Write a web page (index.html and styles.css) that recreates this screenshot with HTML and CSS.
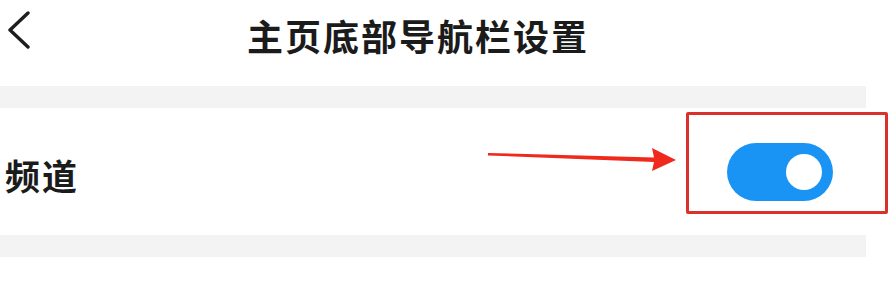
FILE: index.html
```html
<!DOCTYPE html>
<html lang="zh-CN">
<head>
    <meta charset="UTF-8">
    <meta name="viewport" content="width=device-width, initial-scale=1.0">
    <title>主页底部导航栏设置</title>
    <link rel="stylesheet" href="styles.css">
</head>
<body>
    <div class="page">
        <div class="header">
            <svg class="back" width="26" height="38" viewBox="0 0 26 38">
                <polyline points="22,2 4,19 22,36" fill="none" stroke="#1e1e1e" stroke-width="3.4" stroke-linecap="round" stroke-linejoin="round"/>
            </svg>
            <h1 class="title">主页底部导航栏设置</h1>
        </div>
        <div class="gap"></div>
        <div class="row">
            <span class="label">频道</span>
            <div class="toggle on"><span class="knob"></span></div>
            <!-- annotation: arrow and box -->
            <svg class="arrow" width="190" height="32" viewBox="0 0 190 32">
                <polygon points="0,13 166,17.5 164,8 188,20 164,31 166,22 0,15.5" fill="#ef2a1d"/>
            </svg>
            <div class="mark"></div>
        </div>
        <div class="gap"></div>
    </div>
</body>
</html>
```

FILE: styles.css
```css
/* page settings */
body {
    margin: 0;
    padding: 0;
    background: #fff;
    font-family: "Noto Sans CJK SC", "Noto Sans", sans-serif;
    color: #1b1b1b;
}
.page {
    width: 866px;
}
.header {
    display: flex;
    align-items: flex-start;
    height: 86px;
    padding-left: 6px;
    box-sizing: border-box;
}
.back {
    margin-top: 11px;
}
.title {
    margin: 15px 0 0 215px;
    font-size: 36px;
    line-height: 40px;
    font-weight: 700;
    letter-spacing: 2px;
}
.gap {
    height: 22px;
    background-color: #f3f3f4;
}
.row {
    position: relative;
    display: flex;
    align-items: center;
    justify-content: space-between;
    height: 127px;
    padding: 0 33px 0 5px;
    box-sizing: border-box;
}
.label {
    font-size: 35px;
    line-height: 40px;
    font-weight: 700;
    letter-spacing: 2px;
    margin-top: 6px;
}
.toggle {
    position: relative;
    width: 106px;
    height: 58px;
    border-radius: 29px;
    background-color: #ccc;
}
.toggle.on {
    background-color: #1994f4;
}
.knob {
    position: absolute;
    top: 11px;
    right: 11px;
    width: 36px;
    height: 36px;
    border-radius: 50%;
    background: #fff;
}
.arrow {
    position: absolute;
    left: 488px;
    top: 32px;
}
.mark {
    position: absolute;
    left: 686px;
    top: 4px;
    width: 202px;
    height: 102px;
    border: 3px solid #d9312b;
    border-radius: 2px;
    box-sizing: border-box;
}
```
